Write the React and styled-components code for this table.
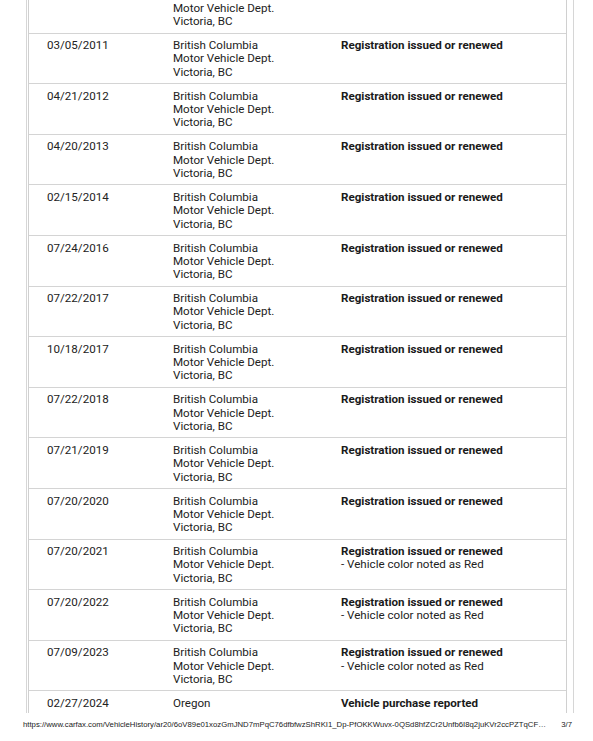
import React from 'react'
import styled, { createGlobalStyle } from 'styled-components'

const GlobalStyle = createGlobalStyle`
  html, body {
    margin: 0;
    padding: 0;
    background: #fff;
  }
`

const bc = ['British Columbia', 'Motor Vehicle Dept.', 'Victoria, BC']
const reg = 'Registration issued or renewed'
const red = '- Vehicle color noted as Red'

const records = [
  { date: '', source: bc, title: '', notes: [] },
  { date: '03/05/2011', source: bc, title: reg, notes: [] },
  { date: '04/21/2012', source: bc, title: reg, notes: [] },
  { date: '04/20/2013', source: bc, title: reg, notes: [] },
  { date: '02/15/2014', source: bc, title: reg, notes: [] },
  { date: '07/24/2016', source: bc, title: reg, notes: [] },
  { date: '07/22/2017', source: bc, title: reg, notes: [] },
  { date: '10/18/2017', source: bc, title: reg, notes: [] },
  { date: '07/22/2018', source: bc, title: reg, notes: [] },
  { date: '07/21/2019', source: bc, title: reg, notes: [] },
  { date: '07/20/2020', source: bc, title: reg, notes: [] },
  { date: '07/20/2021', source: bc, title: reg, notes: [red] },
  { date: '07/20/2022', source: bc, title: reg, notes: [red] },
  { date: '07/09/2023', source: bc, title: reg, notes: [red] },
  { date: '02/27/2024', source: ['Oregon'], title: 'Vehicle purchase reported', notes: [] },
]

const Sheet = styled.div`
  height: 741px;
  display: flex;
  flex-direction: column;
  overflow: hidden;
`

const Frame = styled.div`
  height: 713px;
  flex: none;
  margin-left: 26px;
  width: 539px;
  border-left: 1px solid #d6d6d6;
  border-right: 1px solid #d6d6d6;
  padding-left: 1px;
  padding-right: 6px;
  overflow: hidden;
`

const Table = styled.div`
  margin-top: -17px;
  border-left: 1px solid #d0d0d0;
  border-right: 1px solid #d0d0d0;
  font-family: Roboto, "Liberation Sans", sans-serif;
  font-size: 11.6px;
  line-height: 13.3px;
  color: #222;
`

const Row = styled.div`
  display: grid;
  grid-template-columns: 144px 168px 1fr;
  padding: 5.6px 0 4px;
  border-bottom: 1px solid #d4d4d4;
  min-height: 40px;
`

const DateCell = styled.div`
  padding-left: 18px;
`

const Cell = styled.div`
  display: flex;
  flex-direction: column;
`

const Title = styled.div`
  font-weight: 700;
  color: #1a1a1a;
`

const Footer = styled.div`
  display: flex;
  justify-content: space-between;
  align-items: center;
  padding: 7px 21px 0 23px;
  font-family: "Liberation Sans", Arial, sans-serif;
  font-size: 7.75px;
  color: #222;
  white-space: nowrap;
`

export default function App() {
  return (
    <Sheet>
      <GlobalStyle />
      <Frame>
        <Table>
          {records.map((r, i) => (
            <Row key={i}>
              <DateCell>{r.date}</DateCell>
              <Cell>
                {r.source.map((line) => (
                  <span key={line}>{line}</span>
                ))}
              </Cell>
              <Cell>
                {r.title && <Title>{r.title}</Title>}
                {r.notes.map((n) => (
                  <span key={n}>{n}</span>
                ))}
              </Cell>
            </Row>
          ))}
        </Table>
      </Frame>
      <Footer>
        <span>https://www.carfax.com/VehicleHistory/ar20/6oV89e01xozGmJND7mPqC76dfbfwzShRKI1_Dp-PfOKKWuvx-0QSd8hfZCr2Unfb6I8q2juKVr2ccPZTqCF…</span>
        <span>3/7</span>
      </Footer>
    </Sheet>
  )
}
